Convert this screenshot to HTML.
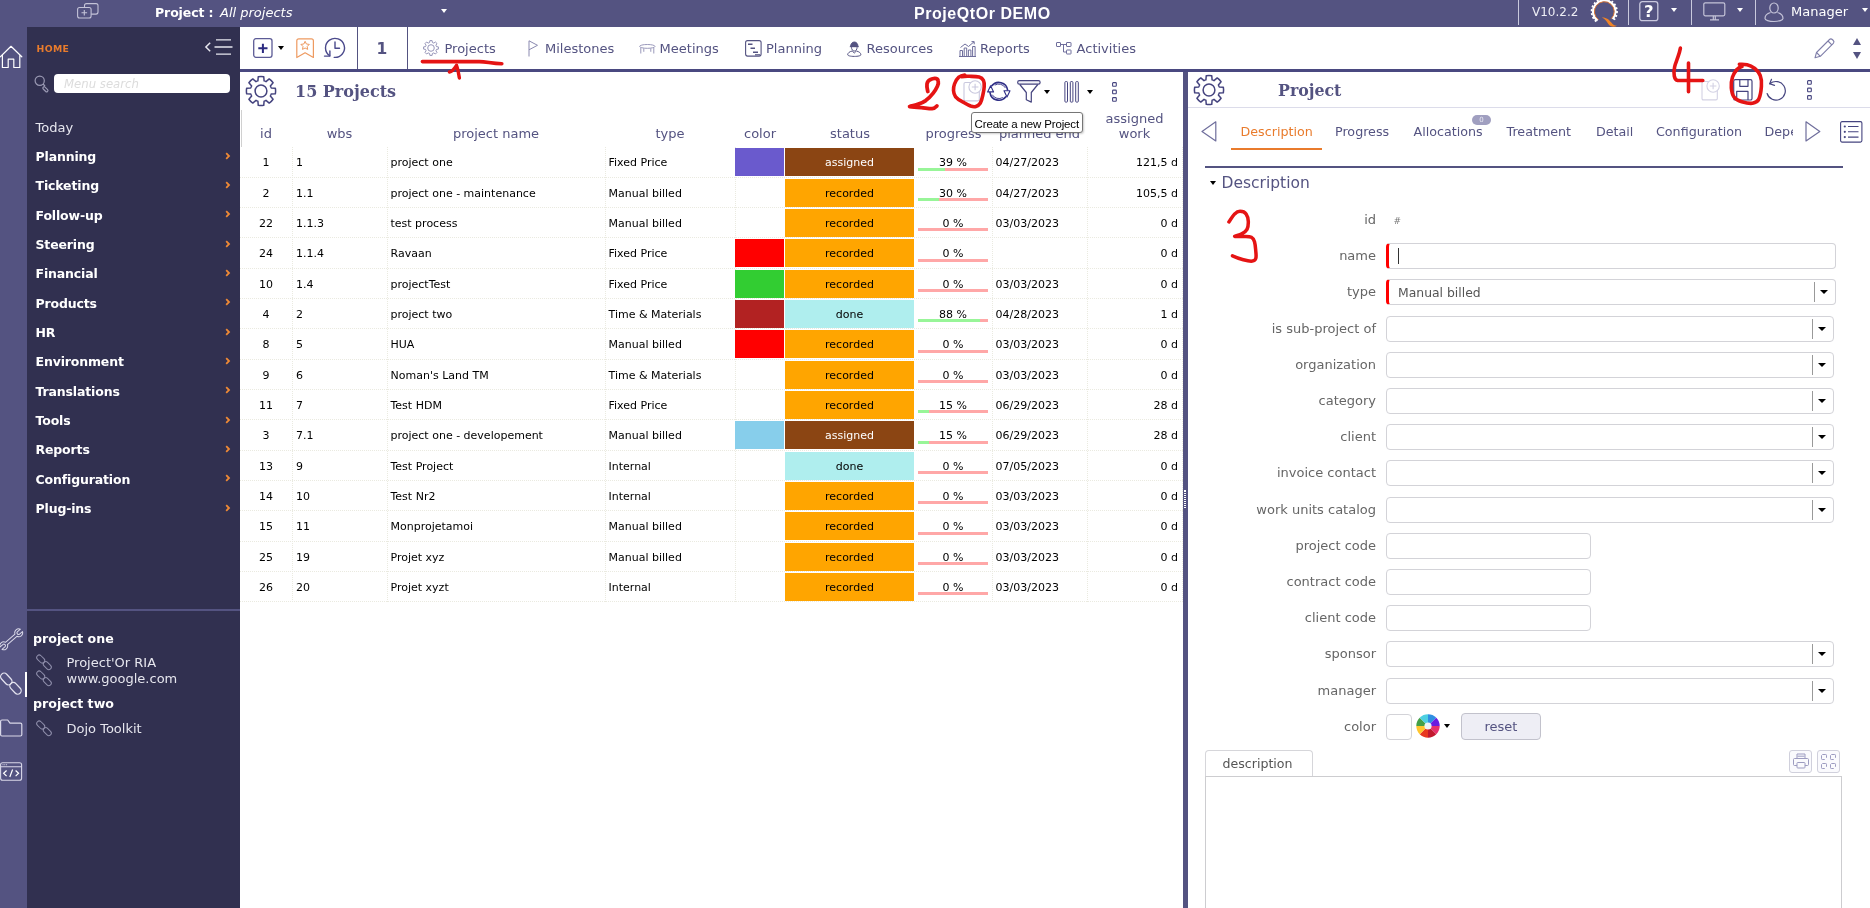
<!DOCTYPE html>
<html lang="en">
<head>
<meta charset="utf-8">
<title>ProjeQtOr DEMO</title>
<style>
*{box-sizing:border-box}
html,body{margin:0;padding:0}
body{width:1870px;height:908px;overflow:hidden;position:relative;background:#fff;font-family:"DejaVu Sans","Liberation Sans",sans-serif;font-size:13px;color:#545381}
#page{position:absolute;left:0;top:0;width:1870px;height:908px;overflow:hidden;will-change:transform}
.abs{position:absolute}
svg{position:absolute;overflow:visible}
#topbar{position:absolute;left:0;top:0;width:1870px;height:27px;background:#545381;color:#fff}
#iconcol{position:absolute;left:0;top:27px;width:27px;height:881px;background:#545381}
#sidebar{position:absolute;left:27px;top:27px;width:213px;height:881px;background:#313050;color:#fff}
#toolbar{position:absolute;left:240px;top:27px;width:1630px;height:45px;background:#fff;border-bottom:3px solid #4a4980;z-index:2}
#list{position:absolute;left:240px;top:71px;width:943px;height:837px;background:#fff}
#splitter{position:absolute;left:1183px;top:71px;width:5px;height:837px;background:#545381}
#detail{position:absolute;left:1188px;top:71px;width:682px;height:837px;background:#fff}
.tb-sep{position:absolute;top:0;width:1px;height:25px;background:#c9c9dd}
.mi{position:absolute;left:8.5px;font-weight:bold;font-size:12.5px;letter-spacing:-0.15px;color:#fff;white-space:nowrap;line-height:16px}
.mi svg{left:189px;top:2.5px}
.tab{position:absolute;top:12px;height:20px;line-height:20px;font-size:13px;color:#545381;white-space:nowrap}
.th{position:absolute;font-size:13px;color:#545381;text-align:center;line-height:15px;white-space:nowrap}
.row{position:absolute;left:0;width:943px;height:31px;font-size:11px;color:#000}
.row span{position:absolute;top:0;line-height:34.6px;height:31px;white-space:nowrap}
.hl{position:absolute;left:0;width:943px;height:0;border-top:1px dotted #eaeae0}
.vl{position:absolute;top:76px;width:0;height:455px;border-left:1px dotted #eaeae0}
.st{position:absolute;left:545px;width:129px;text-align:center;line-height:29.4px;height:28px;font-size:11px}
.pg{position:absolute;left:678px;width:70px;height:3px;background:#ffa7a7}
.pg b{display:block;height:3px;background:#98f598}
.lbl{position:absolute;left:0;width:188px;text-align:right;font-size:13px;color:#666;line-height:26.5px;white-space:nowrap}
.fld{position:absolute;left:198px;height:26px;border:1px solid #d3d3d8;border-radius:4px;background:#fff;font-size:12.4px;color:#555;line-height:25px;padding-left:10px}
.req{border-left:3px solid #f00}
.sel:after{content:"";position:absolute;right:20.5px;top:2px;width:1px;height:20px;background:#999}
.sel:before{content:"";position:absolute;right:7px;top:10px;border:4px solid transparent;border-top:4px solid #000;border-bottom:0}
.dtab{position:absolute;top:52.5px;font-size:12.7px;line-height:16px;color:#545381;white-space:nowrap}
</style>
</head>
<body>
<div id="page">
<svg width="0" height="0" style="left:0;top:0"><defs>
<g id="biggear"><path d="M12.90 5.86L13.26 1.66A14.60 14.60 0 0 1 18.74 1.66L19.10 5.86A10.60 10.60 0 0 1 20.98 6.64L24.21 3.92A14.60 14.60 0 0 1 28.08 7.79L25.36 11.02A10.60 10.60 0 0 1 26.14 12.90L30.34 13.26A14.60 14.60 0 0 1 30.34 18.74L26.14 19.10A10.60 10.60 0 0 1 25.36 20.98L28.08 24.21A14.60 14.60 0 0 1 24.21 28.08L20.98 25.36A10.60 10.60 0 0 1 19.10 26.14L18.74 30.34A14.60 14.60 0 0 1 13.26 30.34L12.90 26.14A10.60 10.60 0 0 1 11.02 25.36L7.79 28.08A14.60 14.60 0 0 1 3.92 24.21L6.64 20.98A10.60 10.60 0 0 1 5.86 19.10L1.66 18.74A14.60 14.60 0 0 1 1.66 13.26L5.86 12.90A10.60 10.60 0 0 1 6.64 11.02L3.92 7.79A14.60 14.60 0 0 1 7.79 3.92L11.02 6.64A10.60 10.60 0 0 1 12.90 5.86Z"/><circle cx="16" cy="16" r="5.900"/></g>
<g id="newdoc"><rect x="1" y="3.500" width="15.300" height="18.400" rx="1.300"/><circle cx="12.100" cy="8" r="6.200" fill="#fff"/><path d="M12.100 4.700v6.600M8.800 8h6.600"/></g>
<g id="dots3"><rect x="0.600" y="0.600" width="3.700" height="3.700" rx="0.700"/><rect x="0.600" y="8.100" width="3.700" height="3.700" rx="0.700"/><rect x="0.600" y="15.600" width="3.700" height="3.700" rx="0.700"/></g>
</defs></svg>
<div id="topbar">
  <svg style="left:77px;top:3px" width="22" height="16" viewBox="0 0 22 16" fill="none" stroke="#c4c3d8" stroke-width="1.1">
    <rect x="7.5" y="0.6" width="13.5" height="10.5" rx="2"/>
    <rect x="0.6" y="4.5" width="13.5" height="10.5" rx="2" fill="#545381"/>
    <path d="M7.3 7v5.6M4.5 9.8h5.6"/>
  </svg>
  <div class="abs" style="left:155px;top:4.500px;line-height:16px;font-size:12.500px;letter-spacing:-0.100px;white-space:nowrap;color:#fff"><b>Project :</b></div>
  <div class="abs" style="left:220px;top:4.500px;line-height:16px;font-size:13px;white-space:nowrap;color:#fff"><i>All projects</i></div>
  <div class="abs" style="left:441px;top:9px;border:3.5px solid transparent;border-top:4px solid #fff;border-bottom:0"></div>
  <div class="abs" style="left:914px;top:4px;font-family:'Liberation Sans',sans-serif;font-weight:bold;font-size:16px;letter-spacing:0.560px;line-height:20px;white-space:nowrap;color:#fff">ProjeQtOr DEMO</div>
  <div class="tb-sep" style="left:1518px"></div>
  <div class="abs" style="left:1532px;top:4px;font-size:12px;line-height:16px;color:#eeeef5">V10.2.2</div>
  <svg style="left:1589px;top:-1px" width="32" height="32" viewBox="0 0 32 32" fill="none">
    <path d="M8.56 21.54A11.2 11.2 0 1 1 23.62 20.09" stroke="#fff" stroke-width="2.200"/>
    <path d="M7.31 22.47A12.7 12.7 0 1 1 25.03 20.76" stroke="#fff" stroke-width="1.800" stroke-dasharray="2 1.870"/>
    <path d="M9.62 20.71A9.9 9.9 0 1 1 22.18 19.72" stroke="#e97b2c" stroke-width="0.900"/>
    <path d="M12.70 18.40c4.600 -0.300 7.600 2.200 9.600 5.200c2 2.500 4 3.500 5.800 3.200c-2.800 1.600 -6.800 1.300 -8.800 -1.700c-2 -3.500 -3.500 -5.500 -6.600 -6.700z" fill="#f08326"/>
  </svg>
  <div class="tb-sep" style="left:1628px"></div>
  <svg style="left:1638.500px;top:1px" width="21" height="21" viewBox="0 0 21 21"><rect x="0.800" y="0.700" width="18" height="19" rx="2.500" fill="none" stroke="#c9c8de" stroke-width="1.300"/><text x="9.800" y="15.900" text-anchor="middle" font-family="DejaVu Sans,sans-serif" font-weight="bold" font-size="16.500" fill="#fff">?</text></svg>
  <div class="abs" style="left:1671px;top:8px;border:3.5px solid transparent;border-top:4px solid #fff;border-bottom:0"></div>
  <div class="tb-sep" style="left:1691px"></div>
  <svg style="left:1703px;top:2px" width="23" height="20" viewBox="0 0 23 20" fill="none" stroke="#c4c3d8" stroke-width="1.2"><rect x="0.800" y="0.800" width="21" height="13" rx="1.500"/><path d="M10.300 14v3.500M12.300 14v3.500M7 17.800h9"/></svg>
  <div class="abs" style="left:1737px;top:8px;border:3.5px solid transparent;border-top:4px solid #fff;border-bottom:0"></div>
  <div class="tb-sep" style="left:1755px"></div>
  <svg style="left:1764px;top:2px" width="20" height="21" viewBox="0 0 20 21" fill="none" stroke="#c4c3d8" stroke-width="1.2"><ellipse cx="10" cy="6" rx="4.200" ry="5"/><path d="M6.500 10.500C3 11.500 1 13.500 1 16.500c0 1.500 4 3 9 3s9-1.500 9-3c0-3-2-5-5.500-6"/></svg>
  <div class="abs" style="left:1791px;top:4px;font-size:13px;line-height:16px;color:#fff">Manager</div>
  <div class="abs" style="left:1862px;top:8px;border:3.5px solid transparent;border-top:4px solid #fff;border-bottom:0"></div>
</div>
<div id="iconcol">
  <svg style="left:0;top:18px" width="23" height="24" viewBox="0 0 23 24" fill="none" stroke="#fff" stroke-width="1.2" stroke-linejoin="round" stroke-linecap="round"><path d="M0.300 11.800 11 1.300 21.800 11.800M2.400 10v12.500h5.800v-8.300h5.600v8.300h6v-12.500"/></svg>
  <svg style="left:0;top:600px" width="24" height="24" viewBox="0 0 24 24" fill="none" stroke="#d9d8e8" stroke-width="1.100" stroke-linejoin="round"><g transform="translate(11.200 12.300) rotate(-41) scale(0.920)"><path d="M6.81 -1.60A4.3 4.3 0 0 1 14.75 -1.70L10.60 -1.70A1.7 1.7 0 0 0 10.60 1.70L14.75 1.70A4.3 4.3 0 0 1 6.81 1.60L-6.81 1.60A4.3 4.3 0 0 1 -14.75 1.70L-10.60 1.70A1.7 1.7 0 0 0 -10.60 -1.70L-14.75 -1.70A4.3 4.3 0 0 1 -6.81 -1.60Z"/></g></svg>
  <svg style="left:0;top:644px" width="24" height="26" viewBox="0 0 24 26" fill="none" stroke="#e4e3ef" stroke-width="1.250"><rect x="-6.700" y="-3.500" width="13.400" height="7" rx="3.500" transform="translate(6.300 8) rotate(47)"/><rect x="-6.700" y="-3.500" width="13.400" height="7" rx="3.500" transform="translate(15.500 17.300) rotate(47)"/></svg>
  <div class="abs" style="left:24.500px;top:645px;width:2.500px;height:25px;background:#fff"></div>
  <svg style="left:0;top:692px" width="24" height="18" viewBox="0 0 24 20" preserveAspectRatio="none" fill="none" stroke="#d9d8e8" stroke-width="1.200" stroke-linejoin="round"><path d="M0.600 17.500V2.500c0-0.800 0.600-1.400 1.400-1.400h5.700l2.300 3.500h10.400c0.800 0 1.400 0.600 1.400 1.400v11.500c0 0.800-0.600 1.400-1.400 1.400H2c-0.800 0-1.400-0.600-1.400-1.400z"/></svg>
  <svg style="left:0;top:735px" width="24" height="20" viewBox="0 0 24 20" fill="none" stroke="#d9d8e8" stroke-width="1.100"><rect x="0.600" y="0.800" width="21" height="17.500" rx="2"/><path d="M0.600 4.800h21M2.500 2.800h1M4.300 2.800h1M6.100 2.800h1" /><path d="M6.600 8.500 3.600 11.300l3 2.800M15.600 8.500l3 2.800-3 2.800M12.600 7.500 9.800 15" stroke="#fff" stroke-width="1.200"/></svg>
</div>
<div id="sidebar">
  <div class="abs" style="left:9.500px;top:14.500px;font-size:9.300px;font-weight:bold;letter-spacing:0.350px;color:#e97b2c;line-height:14px">HOME</div>
  <svg style="left:176px;top:12px" width="30" height="18" viewBox="0 0 30 18" fill="none" stroke="#e6e6ee" stroke-width="1.300"><path d="M7.200 3.800 2.900 8 7.200 12.200" stroke-width="1.500"/><path d="M13 0.900h15M11.500 8h18M13 15.200h15"/></svg>
  <svg style="left:7px;top:48px" width="17" height="17" viewBox="0 0 17 17" fill="none" stroke="#9a99b3" stroke-width="1.200"><circle cx="5.700" cy="5.700" r="4.600"/><path d="M9 9l2 2"/><rect x="10.200" y="11.300" width="6" height="2.600" rx="1.200" transform="rotate(45 10.200 11.300)"/></svg>
  <div class="abs" style="left:27px;top:47px;width:176px;height:19px;background:#fff;border-radius:4px;font-size:11.700px;font-style:italic;color:#dcdcdc;line-height:20.500px;padding-left:10px">Menu search</div>
  <div class="abs" style="left:8.500px;top:92.500px;font-size:13px;line-height:16px;color:#e6e6ee">Today</div>
  <div class="mi" style="top:122px">Planning<svg width="6" height="8" viewBox="0 0 6 8" fill="none" stroke="#f08a35" stroke-width="1.800"><path d="M1.200 1.200 4 4 1.200 6.800"/></svg></div>
  <div class="mi" style="top:151.3px">Ticketing<svg width="6" height="8" viewBox="0 0 6 8" fill="none" stroke="#f08a35" stroke-width="1.800"><path d="M1.200 1.200 4 4 1.200 6.800"/></svg></div>
  <div class="mi" style="top:180.7px">Follow-up<svg width="6" height="8" viewBox="0 0 6 8" fill="none" stroke="#f08a35" stroke-width="1.800"><path d="M1.200 1.200 4 4 1.200 6.800"/></svg></div>
  <div class="mi" style="top:210px">Steering<svg width="6" height="8" viewBox="0 0 6 8" fill="none" stroke="#f08a35" stroke-width="1.800"><path d="M1.200 1.200 4 4 1.200 6.800"/></svg></div>
  <div class="mi" style="top:239.3px">Financial<svg width="6" height="8" viewBox="0 0 6 8" fill="none" stroke="#f08a35" stroke-width="1.800"><path d="M1.200 1.200 4 4 1.200 6.800"/></svg></div>
  <div class="mi" style="top:268.7px">Products<svg width="6" height="8" viewBox="0 0 6 8" fill="none" stroke="#f08a35" stroke-width="1.800"><path d="M1.200 1.200 4 4 1.200 6.800"/></svg></div>
  <div class="mi" style="top:298px">HR<svg width="6" height="8" viewBox="0 0 6 8" fill="none" stroke="#f08a35" stroke-width="1.800"><path d="M1.200 1.200 4 4 1.200 6.800"/></svg></div>
  <div class="mi" style="top:327.3px">Environment<svg width="6" height="8" viewBox="0 0 6 8" fill="none" stroke="#f08a35" stroke-width="1.800"><path d="M1.200 1.200 4 4 1.200 6.800"/></svg></div>
  <div class="mi" style="top:356.7px">Translations<svg width="6" height="8" viewBox="0 0 6 8" fill="none" stroke="#f08a35" stroke-width="1.800"><path d="M1.200 1.200 4 4 1.200 6.800"/></svg></div>
  <div class="mi" style="top:386px">Tools<svg width="6" height="8" viewBox="0 0 6 8" fill="none" stroke="#f08a35" stroke-width="1.800"><path d="M1.200 1.200 4 4 1.200 6.800"/></svg></div>
  <div class="mi" style="top:415.3px">Reports<svg width="6" height="8" viewBox="0 0 6 8" fill="none" stroke="#f08a35" stroke-width="1.800"><path d="M1.200 1.200 4 4 1.200 6.800"/></svg></div>
  <div class="mi" style="top:444.7px">Configuration<svg width="6" height="8" viewBox="0 0 6 8" fill="none" stroke="#f08a35" stroke-width="1.800"><path d="M1.200 1.200 4 4 1.200 6.800"/></svg></div>
  <div class="mi" style="top:474px">Plug-ins<svg width="6" height="8" viewBox="0 0 6 8" fill="none" stroke="#f08a35" stroke-width="1.800"><path d="M1.200 1.200 4 4 1.200 6.800"/></svg></div>
  <div class="abs" style="left:0;top:582px;width:213px;height:2px;background:#545381"></div>
  <div class="abs" style="left:6px;top:604px;font-weight:bold;font-size:12.600px;letter-spacing:0;line-height:16px;color:#fff">project one</div>
  <div class="abs" style="left:39.500px;top:628px;font-size:13px;line-height:16px;color:#e6e6ee">Project'Or RIA</div>
  <div class="abs" style="left:39.500px;top:644px;font-size:13px;line-height:16px;color:#e6e6ee">www.google.com</div>
  <div class="abs" style="left:6px;top:669px;font-weight:bold;font-size:12.600px;letter-spacing:0;line-height:16px;color:#fff">project two</div>
  <div class="abs" style="left:39.500px;top:694px;font-size:13px;line-height:16px;color:#e6e6ee">Dojo Toolkit</div>
  <svg style="left:9px;top:626.5px" width="18" height="18" viewBox="0 0 18 18" fill="none" stroke="#8f8eab" stroke-width="1"><rect x="-4.600" y="-2.500" width="9.200" height="5" rx="2.500" transform="translate(4.700 5) rotate(45)"/><rect x="-4.600" y="-2.500" width="9.200" height="5" rx="2.500" transform="translate(11.300 11.600) rotate(45)"/></svg>
  <svg style="left:9px;top:642.5px" width="18" height="18" viewBox="0 0 18 18" fill="none" stroke="#8f8eab" stroke-width="1"><rect x="-4.600" y="-2.500" width="9.200" height="5" rx="2.500" transform="translate(4.700 5) rotate(45)"/><rect x="-4.600" y="-2.500" width="9.200" height="5" rx="2.500" transform="translate(11.300 11.600) rotate(45)"/></svg>
  <svg style="left:9px;top:692.5px" width="18" height="18" viewBox="0 0 18 18" fill="none" stroke="#8f8eab" stroke-width="1"><rect x="-4.600" y="-2.500" width="9.200" height="5" rx="2.500" transform="translate(4.700 5) rotate(45)"/><rect x="-4.600" y="-2.500" width="9.200" height="5" rx="2.500" transform="translate(11.300 11.600) rotate(45)"/></svg>
</div>
<div id="toolbar">
  <svg style="left:13px;top:11px" width="20" height="21" viewBox="0 0 20 21"><rect x="0.700" y="0.700" width="18.300" height="18.600" rx="2.200" fill="#fff" stroke="#5c5b96" stroke-width="1.300"/><path d="M9.900 5.700v9.200M5.300 10.300h9.200" stroke="#2b2a80" stroke-width="2" fill="none"/></svg>
  <div class="abs" style="left:37.500px;top:19px;border:3.500px solid transparent;border-top:4px solid #000;border-bottom:0"></div>
  <svg style="left:56px;top:11px" width="19" height="21" viewBox="0 0 19 21" fill="none" stroke="#ee9a60" stroke-width="1.200" stroke-linejoin="round"><path d="M0.800 19.500V2.800c0-1.100 0.900-2 2-2h12.600c1.100 0 2 0.900 2 2v16.700l-8.300-4.700z"/><path d="M9.100 3.300l1.300 2.700 2.900 0.400-2.100 2.100 0.500 2.900-2.600-1.400-2.600 1.400 0.500-2.900-2.100-2.100 2.900-0.400z" stroke-width="1"/></svg>
  <svg style="left:84px;top:10px" width="22" height="23" viewBox="0 0 22 23" fill="none" stroke="#4b4a8c" stroke-width="1.400" stroke-linecap="round" stroke-linejoin="round"><path d="M10.17 20.36A9.5 9.5 0 1 0 5.69 18.78"/><path d="M0.49 19.08H5.89V13.98"/><path d="M11 5v6.300h4.500"/></svg>
  <div class="abs" style="left:117px;top:0;width:1px;height:42px;background:#545381"></div>
  <div class="abs" style="left:117px;top:11px;width:50px;text-align:center;font-weight:bold;font-size:15.500px;line-height:22px;color:#545381">1</div>
  <div class="abs" style="left:167px;top:0;width:1px;height:42px;background:#545381"></div>

  <svg style="left:183px;top:13px" width="16" height="16" viewBox="0 0 16 16" fill="none" stroke="#8a89b0" stroke-width="0.900"><path id="sg" d="M6.900 0.600h2.200l0.300 1.900 1.400 0.600 1.600-1.100 1.600 1.600-1.100 1.600 0.600 1.400 1.900 0.300v2.200l-1.900 0.300-0.600 1.400 1.100 1.600-1.600 1.600-1.600-1.100-1.400 0.600-0.300 1.900h-2.200l-0.300-1.900-1.400-0.600-1.600 1.100-1.600-1.600 1.100-1.600-0.600-1.400-1.900-0.300v-2.200l1.900-0.300 0.600-1.400-1.100-1.600 1.600-1.600 1.600 1.100 1.400-0.600z"/><circle cx="8" cy="8" r="3.300"/></svg>
  <div class="tab" style="left:204.500px">Projects</div>
  <svg style="left:288px;top:13px" width="11" height="17" viewBox="0 0 11 17" fill="none" stroke="#8a89b0" stroke-width="1"><path d="M1 16.500V0.800l8.500 4.500-8.500 4.500"/></svg>
  <div class="tab" style="left:305px">Milestones</div>
  <svg style="left:399px;top:17px" width="17" height="10" viewBox="0 0 17 10" fill="none" stroke="#9a99bb" stroke-width="1"><ellipse cx="8.300" cy="2.400" rx="7.700" ry="1.900"/><path d="M1.800 3.800v5.700M14.800 3.800v5.700M4.800 4.300v3.500M11.800 4.300v3.500"/></svg>
  <div class="tab" style="left:419.600px">Meetings</div>
  <svg style="left:504.500px;top:13px" width="17" height="17" viewBox="0 0 17 17" fill="none" stroke="#545381" stroke-width="1.100"><rect x="0.600" y="0.600" width="15.500" height="15.500" rx="2"/><path d="M3 4.200h4.500M5.500 8.200h4.500M8 12.200h5" stroke-width="1.500"/><path d="M10 14.800h5" stroke-width="1.200"/></svg>
  <div class="tab" style="left:526px">Planning</div>
  <svg style="left:606.500px;top:13.500px" width="15" height="16" viewBox="0 0 15 16" fill="none" stroke="#545381" stroke-width="1"><path d="M3.600 5.500c0-2.500 1.500-4.500 3.700-4.500s3.700 2 3.700 4.500z" fill="#545381"/><path d="M2.800 5.700h9"/><path d="M4.500 6.200c0 2.300 1.200 3.800 2.800 3.800s2.800-1.500 2.800-3.800"/><path d="M5.200 10C2.500 10.600 0.700 12 0.700 13.800c0 0.900 2.800 1.600 6.600 1.600s6.600-0.700 6.600-1.600c0-1.800-1.800-3.200-4.500-3.800l-2.100 2z"/></svg>
  <div class="tab" style="left:626.600px">Resources</div>
  <svg style="left:718.500px;top:13.500px" width="17" height="16" viewBox="0 0 17 16" fill="none" stroke="#6f6e9c" stroke-width="1"><path d="M1 15.500V9.500h2.500v6M5.200 15.500V7h2.500v8.500M9.400 15.500V9h2.500v6.500M13.600 15.500V5.500h2.500v10M0 15.500h17"/><path d="M1.500 6.500 6 3l3.500 2.500L15 0.800M12.500 0.600h2.700v2.700"/></svg>
  <div class="tab" style="left:740px">Reports</div>
  <svg style="left:816px;top:15px" width="16" height="13" viewBox="0 0 16 13" fill="none" stroke="#6f6e9c" stroke-width="1"><rect x="0.500" y="0.500" width="4" height="4" rx="0.400"/><rect x="10.500" y="0.500" width="4.500" height="4" rx="0.400"/><rect x="10.500" y="8" width="4.500" height="4" rx="0.400"/><path d="M4.500 2.500h6M7.500 2.500v7.500h3"/></svg>
  <div class="tab" style="left:836.600px">Activities</div>

  <svg style="left:1574px;top:10px" width="22" height="22" viewBox="0 0 22 22" fill="none" stroke="#7f7ea9" stroke-width="1.100" stroke-linejoin="round"><path d="M1 20.800l1.500-5.300L15.500 2.500c0.800-0.800 2-0.800 2.800 0l1 1c0.800 0.800 0.800 2 0 2.800L6.300 19.300z"/><path d="M2.500 15.500l3.800 3.800M14 4l3.800 3.800"/></svg>
  <div class="abs" style="left:1612.500px;top:11px;border:4px solid transparent;border-bottom:7px solid #545381;border-top:0"></div>
  <div class="abs" style="left:1612.500px;top:25px;border:4px solid transparent;border-top:7px solid #545381;border-bottom:0"></div>
</div>
<div id="list">
  <svg style="left:5px;top:3.500px" width="32" height="32" viewBox="0 0 32 32" fill="none" stroke="#45447f" stroke-width="1.500" stroke-linejoin="round"><use href="#biggear"/></svg>
  <div class="abs" style="left:55px;top:10px;font-family:'DejaVu Serif',serif;font-weight:bold;font-size:16px;line-height:22px;white-space:nowrap;color:#545381">15 Projects</div>
  <div class="abs" style="left:1px;top:39px;width:1px;height:37px;background:#d0d0d0"></div>
  <div class="th" style="left:0;width:52px;top:55px">id</div>
  <div class="th" style="left:52px;width:95px;top:55px">wbs</div>
  <div class="th" style="left:147px;width:218px;top:55px">project name</div>
  <div class="th" style="left:365px;width:130px;top:55px">type</div>
  <div class="th" style="left:495px;width:50px;top:55px">color</div>
  <div class="th" style="left:545px;width:130px;top:55px">status</div>
  <div class="th" style="left:675px;width:77px;top:55px">progress</div>
  <div class="th" style="left:752px;width:95px;top:55px">planned end</div>
  <div class="th" style="left:847px;width:95px;top:40px">assigned<br>work</div>
  <svg style="left:723.200px;top:8.200px" width="19" height="23" viewBox="0 0 19 23" fill="none" stroke="#c9c8de" stroke-width="1.100"><use href="#newdoc"/></svg>
  <svg style="left:747px;top:9px" width="24" height="23" viewBox="0 0 24 23" fill="none" stroke="#2f2e86" stroke-width="1.300" stroke-linecap="round" stroke-linejoin="round"><path d="M18.81 16.78A8.9 8.9 0 0 1 2.99 12.54M4.79 5.82A8.9 8.9 0 0 1 20.61 10.06" stroke-width="1.600"/><path d="M15.50 17.71A7.4 7.4 0 0 1 5.39 15.00M8.10 4.89A7.4 7.4 0 0 1 18.21 7.60" stroke-width="0.900"/><path d="M0.60 11.90L3.60 5.70L6.60 11.90ZM23.00 10.70L20.00 16.90L17.00 10.70Z" fill="#fff" stroke-width="1.100"/></svg>
  <svg style="left:777px;top:9px" width="24" height="23" viewBox="0 0 24 23" fill="none" stroke="#45447f" stroke-width="1.200" stroke-linejoin="round"><rect x="0.700" y="0.700" width="22.400" height="3.500" rx="1.600" fill="#f2f2f8"/><path d="M2.800 4.500l6.500 8v7.300l5 2.300v-9.600l6.500-8"/></svg>
  <div class="abs" style="left:804px;top:19px;border:3.500px solid transparent;border-top:4px solid #000;border-bottom:0"></div>
  <svg style="left:824px;top:10px" width="16" height="22" viewBox="0 0 16 22" fill="none" stroke="#45447f" stroke-width="1"><rect x="0.900" y="0.600" width="2.600" height="20.500" rx="0.800"/><rect x="6.300" y="0.600" width="2.600" height="20.500" rx="0.800"/><rect x="11.700" y="0.600" width="2.600" height="20.500" rx="0.800"/></svg>
  <div class="abs" style="left:847px;top:19px;border:3.500px solid transparent;border-top:4px solid #000;border-bottom:0"></div>
  <svg style="left:871.500px;top:10.500px" width="6" height="21" viewBox="0 0 6 21" fill="none" stroke="#45447f" stroke-width="1.100"><use href="#dots3"/></svg>

<div class="vl" style="left:51.5px"></div>
<div class="vl" style="left:146.5px"></div>
<div class="vl" style="left:365px"></div>
<div class="vl" style="left:494.5px"></div>
<div class="vl" style="left:751.5px"></div>
<div class="vl" style="left:846.5px"></div>
<div class="vl" style="left:941.5px"></div>
<div class="hl" style="top:106px"></div>
<div class="row" style="top:75.40px"><span style="left:0;width:52px;text-align:center">1</span><span style="left:56px">1</span><span style="left:150.500px">project one</span><span style="left:368.500px">Fixed Price</span><div class="abs" style="left:495px;top:2px;width:49px;height:28px;background:#6a5acd"></div><div class="st" style="top:2px;background:#8b4513;color:#fff">assigned</div><span style="left:678px;width:70px;text-align:center;line-height:33px">39 %</span><div class="pg" style="top:21.300px"><b style="width:39%"></b></div><span style="left:755.500px">04/27/2023</span><span style="left:846px;width:92px;text-align:right">121,5 d</span></div>
<div class="hl" style="top:136px"></div>
<div class="row" style="top:105.73px"><span style="left:0;width:52px;text-align:center">2</span><span style="left:56px">1.1</span><span style="left:150.500px">project one - maintenance</span><span style="left:368.500px">Manual billed</span><div class="st" style="top:2px;background:#ffa500;color:#000">recorded</div><span style="left:678px;width:70px;text-align:center;line-height:33px">30 %</span><div class="pg" style="top:21.300px"><b style="width:30%"></b></div><span style="left:755.500px">04/27/2023</span><span style="left:846px;width:92px;text-align:right">105,5 d</span></div>
<div class="hl" style="top:166px"></div>
<div class="row" style="top:136.06px"><span style="left:0;width:52px;text-align:center">22</span><span style="left:56px">1.1.3</span><span style="left:150.500px">test process</span><span style="left:368.500px">Manual billed</span><div class="st" style="top:2px;background:#ffa500;color:#000">recorded</div><span style="left:678px;width:70px;text-align:center;line-height:33px">0 %</span><div class="pg" style="top:21.300px"><b style="width:0%"></b></div><span style="left:755.500px">03/03/2023</span><span style="left:846px;width:92px;text-align:right">0 d</span></div>
<div class="hl" style="top:197px"></div>
<div class="row" style="top:166.39px"><span style="left:0;width:52px;text-align:center">24</span><span style="left:56px">1.1.4</span><span style="left:150.500px">Ravaan</span><span style="left:368.500px">Fixed Price</span><div class="abs" style="left:495px;top:2px;width:49px;height:28px;background:#ff0000"></div><div class="st" style="top:2px;background:#ffa500;color:#000">recorded</div><span style="left:678px;width:70px;text-align:center;line-height:33px">0 %</span><div class="pg" style="top:21.300px"><b style="width:0%"></b></div><span style="left:846px;width:92px;text-align:right">0 d</span></div>
<div class="hl" style="top:227px"></div>
<div class="row" style="top:196.72px"><span style="left:0;width:52px;text-align:center">10</span><span style="left:56px">1.4</span><span style="left:150.500px">projectTest</span><span style="left:368.500px">Fixed Price</span><div class="abs" style="left:495px;top:2px;width:49px;height:28px;background:#32cd32"></div><div class="st" style="top:2px;background:#ffa500;color:#000">recorded</div><span style="left:678px;width:70px;text-align:center;line-height:33px">0 %</span><div class="pg" style="top:21.300px"><b style="width:0%"></b></div><span style="left:755.500px">03/03/2023</span><span style="left:846px;width:92px;text-align:right">0 d</span></div>
<div class="hl" style="top:257px"></div>
<div class="row" style="top:227.05px"><span style="left:0;width:52px;text-align:center">4</span><span style="left:56px">2</span><span style="left:150.500px">project two</span><span style="left:368.500px">Time &amp; Materials</span><div class="abs" style="left:495px;top:2px;width:49px;height:28px;background:#b22222"></div><div class="st" style="top:2px;background:#afeeee;color:#000">done</div><span style="left:678px;width:70px;text-align:center;line-height:33px">88 %</span><div class="pg" style="top:21.300px"><b style="width:88%"></b></div><span style="left:755.500px">04/28/2023</span><span style="left:846px;width:92px;text-align:right">1 d</span></div>
<div class="hl" style="top:288px"></div>
<div class="row" style="top:257.38px"><span style="left:0;width:52px;text-align:center">8</span><span style="left:56px">5</span><span style="left:150.500px">HUA</span><span style="left:368.500px">Manual billed</span><div class="abs" style="left:495px;top:2px;width:49px;height:28px;background:#ff0000"></div><div class="st" style="top:2px;background:#ffa500;color:#000">recorded</div><span style="left:678px;width:70px;text-align:center;line-height:33px">0 %</span><div class="pg" style="top:21.300px"><b style="width:0%"></b></div><span style="left:755.500px">03/03/2023</span><span style="left:846px;width:92px;text-align:right">0 d</span></div>
<div class="hl" style="top:318px"></div>
<div class="row" style="top:287.71px"><span style="left:0;width:52px;text-align:center">9</span><span style="left:56px">6</span><span style="left:150.500px">Noman's Land TM</span><span style="left:368.500px">Time &amp; Materials</span><div class="st" style="top:2px;background:#ffa500;color:#000">recorded</div><span style="left:678px;width:70px;text-align:center;line-height:33px">0 %</span><div class="pg" style="top:21.300px"><b style="width:0%"></b></div><span style="left:755.500px">03/03/2023</span><span style="left:846px;width:92px;text-align:right">0 d</span></div>
<div class="hl" style="top:348px"></div>
<div class="row" style="top:318.04px"><span style="left:0;width:52px;text-align:center">11</span><span style="left:56px">7</span><span style="left:150.500px">Test HDM</span><span style="left:368.500px">Fixed Price</span><div class="st" style="top:2px;background:#ffa500;color:#000">recorded</div><span style="left:678px;width:70px;text-align:center;line-height:33px">15 %</span><div class="pg" style="top:21.300px"><b style="width:15%"></b></div><span style="left:755.500px">06/29/2023</span><span style="left:846px;width:92px;text-align:right">28 d</span></div>
<div class="hl" style="top:379px"></div>
<div class="row" style="top:348.37px"><span style="left:0;width:52px;text-align:center">3</span><span style="left:56px">7.1</span><span style="left:150.500px">project one - developement</span><span style="left:368.500px">Manual billed</span><div class="abs" style="left:495px;top:2px;width:49px;height:28px;background:#87ceeb"></div><div class="st" style="top:2px;background:#8b4513;color:#fff">assigned</div><span style="left:678px;width:70px;text-align:center;line-height:33px">15 %</span><div class="pg" style="top:21.300px"><b style="width:15%"></b></div><span style="left:755.500px">06/29/2023</span><span style="left:846px;width:92px;text-align:right">28 d</span></div>
<div class="hl" style="top:409px"></div>
<div class="row" style="top:378.70px"><span style="left:0;width:52px;text-align:center">13</span><span style="left:56px">9</span><span style="left:150.500px">Test Project</span><span style="left:368.500px">Internal</span><div class="st" style="top:2px;background:#afeeee;color:#000">done</div><span style="left:678px;width:70px;text-align:center;line-height:33px">0 %</span><div class="pg" style="top:21.300px"><b style="width:0%"></b></div><span style="left:755.500px">07/05/2023</span><span style="left:846px;width:92px;text-align:right">0 d</span></div>
<div class="hl" style="top:439px"></div>
<div class="row" style="top:409.03px"><span style="left:0;width:52px;text-align:center">14</span><span style="left:56px">10</span><span style="left:150.500px">Test Nr2</span><span style="left:368.500px">Internal</span><div class="st" style="top:2px;background:#ffa500;color:#000">recorded</div><span style="left:678px;width:70px;text-align:center;line-height:33px">0 %</span><div class="pg" style="top:21.300px"><b style="width:0%"></b></div><span style="left:755.500px">03/03/2023</span><span style="left:846px;width:92px;text-align:right">0 d</span></div>
<div class="hl" style="top:470px"></div>
<div class="row" style="top:439.36px"><span style="left:0;width:52px;text-align:center">15</span><span style="left:56px">11</span><span style="left:150.500px">Monprojetamoi</span><span style="left:368.500px">Manual billed</span><div class="st" style="top:2px;background:#ffa500;color:#000">recorded</div><span style="left:678px;width:70px;text-align:center;line-height:33px">0 %</span><div class="pg" style="top:21.300px"><b style="width:0%"></b></div><span style="left:755.500px">03/03/2023</span><span style="left:846px;width:92px;text-align:right">0 d</span></div>
<div class="hl" style="top:500px"></div>
<div class="row" style="top:469.69px"><span style="left:0;width:52px;text-align:center">25</span><span style="left:56px">19</span><span style="left:150.500px">Projet xyz</span><span style="left:368.500px">Manual billed</span><div class="st" style="top:2px;background:#ffa500;color:#000">recorded</div><span style="left:678px;width:70px;text-align:center;line-height:33px">0 %</span><div class="pg" style="top:21.300px"><b style="width:0%"></b></div><span style="left:755.500px">03/03/2023</span><span style="left:846px;width:92px;text-align:right">0 d</span></div>
<div class="hl" style="top:530px"></div>
<div class="row" style="top:500.02px"><span style="left:0;width:52px;text-align:center">26</span><span style="left:56px">20</span><span style="left:150.500px">Projet xyzt</span><span style="left:368.500px">Internal</span><div class="st" style="top:2px;background:#ffa500;color:#000">recorded</div><span style="left:678px;width:70px;text-align:center;line-height:33px">0 %</span><div class="pg" style="top:21.300px"><b style="width:0%"></b></div><span style="left:755.500px">03/03/2023</span><span style="left:846px;width:92px;text-align:right">0 d</span></div>
</div>
<div id="splitter"><div class="abs" style="left:1px;top:419px;width:2px;height:18px;border-left:1px dotted #fff;border-right:1px dotted #fff"></div></div>
<div id="detail">
  <svg style="left:4.500px;top:2.500px" width="32" height="32" viewBox="0 0 32 32" fill="none" stroke="#45447f" stroke-width="1.500" stroke-linejoin="round"><use href="#biggear"/></svg>
  <div class="abs" style="left:90px;top:9px;font-family:'DejaVu Serif',serif;font-weight:bold;font-size:15.800px;line-height:22px;color:#545381">Project</div>
  <svg style="left:513.300px;top:6.500px" width="19" height="23" viewBox="0 0 19 23" fill="none" stroke="#d3d2e4" stroke-width="1.100"><use href="#newdoc"/></svg>
  <svg style="left:545.200px;top:8.300px" width="20" height="22" viewBox="0 0 20 22" fill="none" stroke="#45447f" stroke-width="1.200" stroke-linejoin="round"><rect x="0.700" y="0.700" width="18.300" height="20.300" rx="1.600"/><path d="M6.800 0.700v6.600h8.200V0.700M3.700 21v-8.600h11.300V21"/></svg>
  <svg style="left:577px;top:7px" width="22" height="24" viewBox="0 0 22 24" fill="none" stroke="#45447f" stroke-width="1.200" stroke-linecap="round" stroke-linejoin="round"><path d="M4.90 5.78A9.3 9.3 0 1 1 2.11 15.52"/><path d="M6.500 1.300L4.70 5.78L9.500 7.400"/></svg>
  <svg style="left:618.500px;top:9px" width="6" height="21" viewBox="0 0 6 21" fill="none" stroke="#45447f" stroke-width="1.100"><use href="#dots3"/></svg>
  <div class="abs" style="left:0;top:36px;width:682px;height:1px;background:#dcdcea"></div>
  <svg style="left:13px;top:50px" width="16" height="21" viewBox="0 0 16 21" fill="none" stroke="#6f6e9c" stroke-width="1.200" stroke-linejoin="round"><path d="M14.800 0.800v19.200L1 10.400z"/></svg>
  <div class="dtab" style="left:52.500px;color:#e97b2c">Description</div>
  <div class="abs" style="left:43px;top:77px;width:91px;height:2px;background:#e97b2c"></div>
  <div class="dtab" style="left:147px">Progress</div>
  <div class="dtab" style="left:225.500px">Allocations</div>
  <div class="abs" style="left:284px;top:44px;width:19px;height:10px;border-radius:5px;background:#a09fc0;color:#e8e8f2;font-size:7px;line-height:10px;text-align:center">0</div>
  <div class="dtab" style="left:318.500px">Treatment</div>
  <div class="dtab" style="left:408px">Detail</div>
  <div class="dtab" style="left:468px">Configuration</div>
  <div class="dtab" style="left:576.500px;width:28.500px;overflow:hidden">Dependencies</div>
  <svg style="left:617px;top:50px" width="16" height="21" viewBox="0 0 16 21" fill="none" stroke="#6f6e9c" stroke-width="1.200" stroke-linejoin="round"><path d="M1 0.800v19.200l13.800-9.600z"/></svg>
  <svg style="left:651.500px;top:49.500px" width="23" height="22" viewBox="0 0 23 22" fill="none" stroke="#45447f" stroke-width="1.100"><rect x="0.600" y="0.600" width="21.300" height="20.500" rx="1.500"/><path d="M8 5.500h10.500M8 10.800h10.500M8 16.100h10.500"/><circle cx="4.800" cy="5.500" r="1.100" fill="#45447f" stroke="none"/><circle cx="4.800" cy="10.800" r="1.100" fill="#45447f" stroke="none"/><circle cx="4.800" cy="16.100" r="1.100" fill="#45447f" stroke="none"/></svg>
  <div class="abs" style="left:16.500px;top:95px;width:638px;height:2px;background:#545381"></div>
  <div class="abs" style="left:21.500px;top:109.500px;border:3.500px solid transparent;border-top:4px solid #000;border-bottom:0"></div>
  <div class="abs" style="left:33.500px;top:102px;font-size:15.500px;line-height:20px;color:#545381">Description</div>

  <div class="lbl" style="top:136px">id</div>
  <div class="abs" style="left:205.500px;top:136.5px;font-size:9px;line-height:26px;color:#777">#</div>
  <div class="lbl" style="top:172px">name</div>
  <div class="fld req" style="top:172px;width:450px"><div class="abs" style="left:8.500px;top:4px;width:1px;height:16px;background:#333"></div></div>
  <div class="lbl" style="top:208px">type</div>
  <div class="fld req sel" style="top:208px;width:450px;padding-left:9px">Manual billed</div>
  <div class="lbl" style="top:244.5px">is sub-project of</div>
  <div class="fld sel" style="top:244.5px;width:448px"></div>
  <div class="lbl" style="top:280.5px">organization</div>
  <div class="fld sel" style="top:280.5px;width:448px"></div>
  <div class="lbl" style="top:317px">category</div>
  <div class="fld sel" style="top:317px;width:448px"></div>
  <div class="lbl" style="top:353px">client</div>
  <div class="fld sel" style="top:353px;width:448px"></div>
  <div class="lbl" style="top:389px">invoice contact</div>
  <div class="fld sel" style="top:389px;width:448px"></div>
  <div class="lbl" style="top:425.5px">work units catalog</div>
  <div class="fld sel" style="top:425.5px;width:448px"></div>
  <div class="lbl" style="top:461.5px">project code</div>
  <div class="fld" style="top:461.5px;width:205px"></div>
  <div class="lbl" style="top:498px">contract code</div>
  <div class="fld" style="top:498px;width:205px"></div>
  <div class="lbl" style="top:534px">client code</div>
  <div class="fld" style="top:534px;width:205px"></div>
  <div class="lbl" style="top:570px">sponsor</div>
  <div class="fld sel" style="top:570px;width:448px"></div>
  <div class="lbl" style="top:606.5px">manager</div>
  <div class="fld sel" style="top:606.5px;width:448px"></div>
  <div class="lbl" style="top:642.5px">color</div>
  <div class="fld" style="top:642.5px;width:26px;padding:0"></div>
  <svg style="left:227.500px;top:642.5px" width="24" height="24" viewBox="0 0 24 24"><path d="M12 12L12.00 0.30A11.7 11.7 0 0 1 20.27 3.73Z" fill="#2f8fe3"/><path d="M12 12L20.27 3.73A11.7 11.7 0 0 1 23.70 12.00Z" fill="#6a1be0"/><path d="M12 12L23.70 12.00A11.7 11.7 0 0 1 20.27 20.27Z" fill="#e8306c"/><path d="M12 12L20.27 20.27A11.7 11.7 0 0 1 12.00 23.70Z" fill="#c2182e"/><path d="M12 12L12.00 23.70A11.7 11.7 0 0 1 3.73 20.27Z" fill="#e8391f"/><path d="M12 12L3.73 20.27A11.7 11.7 0 0 1 0.30 12.00Z" fill="#ffc62e"/><path d="M12 12L0.30 12.00A11.7 11.7 0 0 1 3.73 3.73Z" fill="#43a047"/><path d="M12 12L3.73 3.73A11.7 11.7 0 0 1 12.00 0.30Z" fill="#4dd0e1"/><circle cx="12" cy="12" r="3.600" fill="#eef3f6"/></svg>
  <div class="abs" style="left:255.500px;top:652.5px;border:3.500px solid transparent;border-top:4px solid #000;border-bottom:0"></div>
  <div class="abs" style="left:273px;top:642px;width:80px;height:26.500px;border:1px solid #c2c2cc;border-radius:4px;background:#eeeef5;color:#545381;font-size:13px;line-height:25px;text-align:center">reset</div>
  <div class="abs" style="left:17px;top:678.500px;width:108px;height:27px;border:1px solid #d6d6da;border-bottom:0;border-radius:4px 4px 0 0;background:#fff;font-size:12.600px;color:#555;line-height:26px;text-align:center;padding-right:3px">description</div>
  <div class="abs" style="left:17px;top:705px;width:637px;height:140px;border:1px solid #cdcdd0;background:#fff"></div>
  <div class="abs" style="left:601px;top:678.500px;width:23px;height:23px;border:1px solid #d0d0dc;border-radius:3px;background:#fafafd"></div>
  <svg style="left:605px;top:682px" width="16" height="16" viewBox="0 0 16 16" fill="none" stroke="#9c9bc0" stroke-width="1"><path d="M4 5.500V1h8v4.500M4 12.500H1.500c-0.600 0-1-0.400-1-1V6.500c0-0.600 0.400-1 1-1h13c0.600 0 1 0.400 1 1v5c0 0.600-0.400 1-1 1H12"/><rect x="4" y="9.500" width="8" height="5.500" rx="0.800"/><path d="M4.500 3.200h7"/></svg>
  <div class="abs" style="left:628.500px;top:678.500px;width:23px;height:23px;border:1px solid #d0d0dc;border-radius:3px;background:#fafafd"></div>
  <svg style="left:632.500px;top:682.500px" width="15" height="15" viewBox="0 0 15 15" fill="none" stroke="#9c9bc0" stroke-width="1"><rect x="0.500" y="0.500" width="5" height="5" rx="0.800" stroke-dasharray="7 3"/><rect x="9.500" y="0.500" width="5" height="5" rx="0.800" stroke-dasharray="7 3"/><rect x="0.500" y="9.500" width="5" height="5" rx="0.800" stroke-dasharray="7 3"/><rect x="9.500" y="9.500" width="5" height="5" rx="0.800" stroke-dasharray="7 3"/></svg>

</div>
<svg style="left:0;top:0;z-index:5" width="1870" height="908" viewBox="0 0 1870 908" fill="none" stroke="#e51414" stroke-width="3.600" stroke-linecap="round" stroke-linejoin="round">
  <path d="M422.400 61.600H479.400C487 61.800 492 63.700 501.800 63.800"/>
  <path d="M449.400 72C452.500 71.500 454.500 68.500 456.500 65.300C458 69 458.600 74 459.400 78" stroke-width="3.400"/>
  <path d="M927.800 91.500C927.300 89 926.600 86.500 927 84C927.400 81.800 928.300 80.600 930 79.800C931.500 79 933.200 78.400 934.800 78.400C936.600 78.400 937.900 79.200 938.200 80.800C938.600 82.600 938.200 84.500 937.400 86.200C936.300 88.600 934.900 91 933.200 93.100C931 95.900 928.500 98.500 925.700 100.600C923.300 102.300 920.500 103.500 917.600 104.400C915 105.200 912.300 105.800 909.600 106.500C913.500 107 917.500 107.300 921.400 107.600C925 107.900 928.500 108.500 932.100 108.600C934 108.600 935.700 107.300 936.900 106" stroke-width="3.800"/>
  <path d="M964.700 75C962.500 75.300 960.500 75.800 958.800 77.100C956.700 78.900 955.400 81.500 954.500 84C953.700 86.100 953.400 88.300 953.500 90.500C953.600 92.800 954.300 95 955.600 96.900C957.500 99.300 960.400 100.900 963.100 102.200C965.500 103.500 968 105 970.600 106C972.300 106.600 974.200 107 975.900 106.500C977.900 105.900 979.300 104.700 980.200 103.300C981.700 100.700 982.300 97.600 982.900 94.700C983.500 92 984.100 89.400 984.200 86.700C984.300 84.500 984.300 82.100 983.400 80.300C982.500 78.600 980.900 77.600 979.100 77.100C976 76.300 972.700 76.400 969.500 76.300C966.800 76.200 964.100 76.300 961.500 76.600" stroke-width="3.600"/>
  <path d="M1228.900 221.900C1230.800 219.200 1232.500 216.200 1234.700 213.900C1236.200 212.400 1238 211.300 1240 211.300C1242.400 211.300 1244.800 212 1246.100 213.900C1247.600 216 1248.200 218.800 1248.300 221.400C1248.400 224.100 1248.100 227 1247 229.400C1245.900 231.500 1243.800 232.800 1241.700 233.800C1239.500 234.900 1237 235.500 1234.700 236.400H1245.200C1247.300 236.400 1249.600 236.300 1251.400 237.300C1253 238.200 1254 240 1254.500 241.700C1255.400 244.800 1255.500 248.200 1255.800 251.400C1256 253.700 1256.400 256.200 1255.800 258.400C1255.400 259.900 1253.900 260.900 1252.300 261.100C1248.700 261.500 1245.100 260.200 1241.700 259.300C1238.500 258.400 1235.500 257.100 1232.500 255.800" stroke-width="3.500"/>
  <path d="M1680.400 48.100C1679.800 51.400 1678.800 54.600 1677.700 57.700C1676.600 60.800 1675.200 63.800 1674.600 67C1674 70 1673.600 73.300 1674.300 76.200C1674.700 78.200 1675.800 80.200 1677.700 80.500H1702.800M1688.500 63.100V91.700" stroke-width="3.600"/>
  <path d="M1742 66.500C1740.200 67 1738.300 67.700 1737.100 69.300C1735.200 71.500 1733.500 74.200 1732.500 77C1731.400 80.500 1730.900 84.200 1731.300 87.800C1731.600 91 1732.200 94.500 1734 97C1735.800 99.500 1738.800 100.900 1741.700 101.700C1745.200 102.700 1749 103.800 1752.500 103.200C1755.300 102.700 1757.600 101.700 1758.700 99.400C1760.500 95.300 1761.100 90.700 1761.400 86.300C1761.700 82.700 1761.600 78.900 1760.200 75.500C1759.100 72.700 1757.100 70.300 1754.800 68.500C1752.600 66.800 1749.900 65.300 1747.100 64.700C1744.600 64.200 1741.900 64.100 1739.400 64.300" stroke-width="3.600"/>
</svg>
<div class="abs" style="z-index:6;left:970.500px;top:112px;width:112.500px;height:21px;border:1px solid #767676;border-radius:3px;background:#fff;box-shadow:1px 1px 2px rgba(0,0,0,0.200);font-family:'Liberation Sans',sans-serif;font-size:11.500px;letter-spacing:-0.150px;line-height:22px;color:#000;text-align:center;white-space:nowrap">Create a new Project</div>
</div>
</body>
</html>
